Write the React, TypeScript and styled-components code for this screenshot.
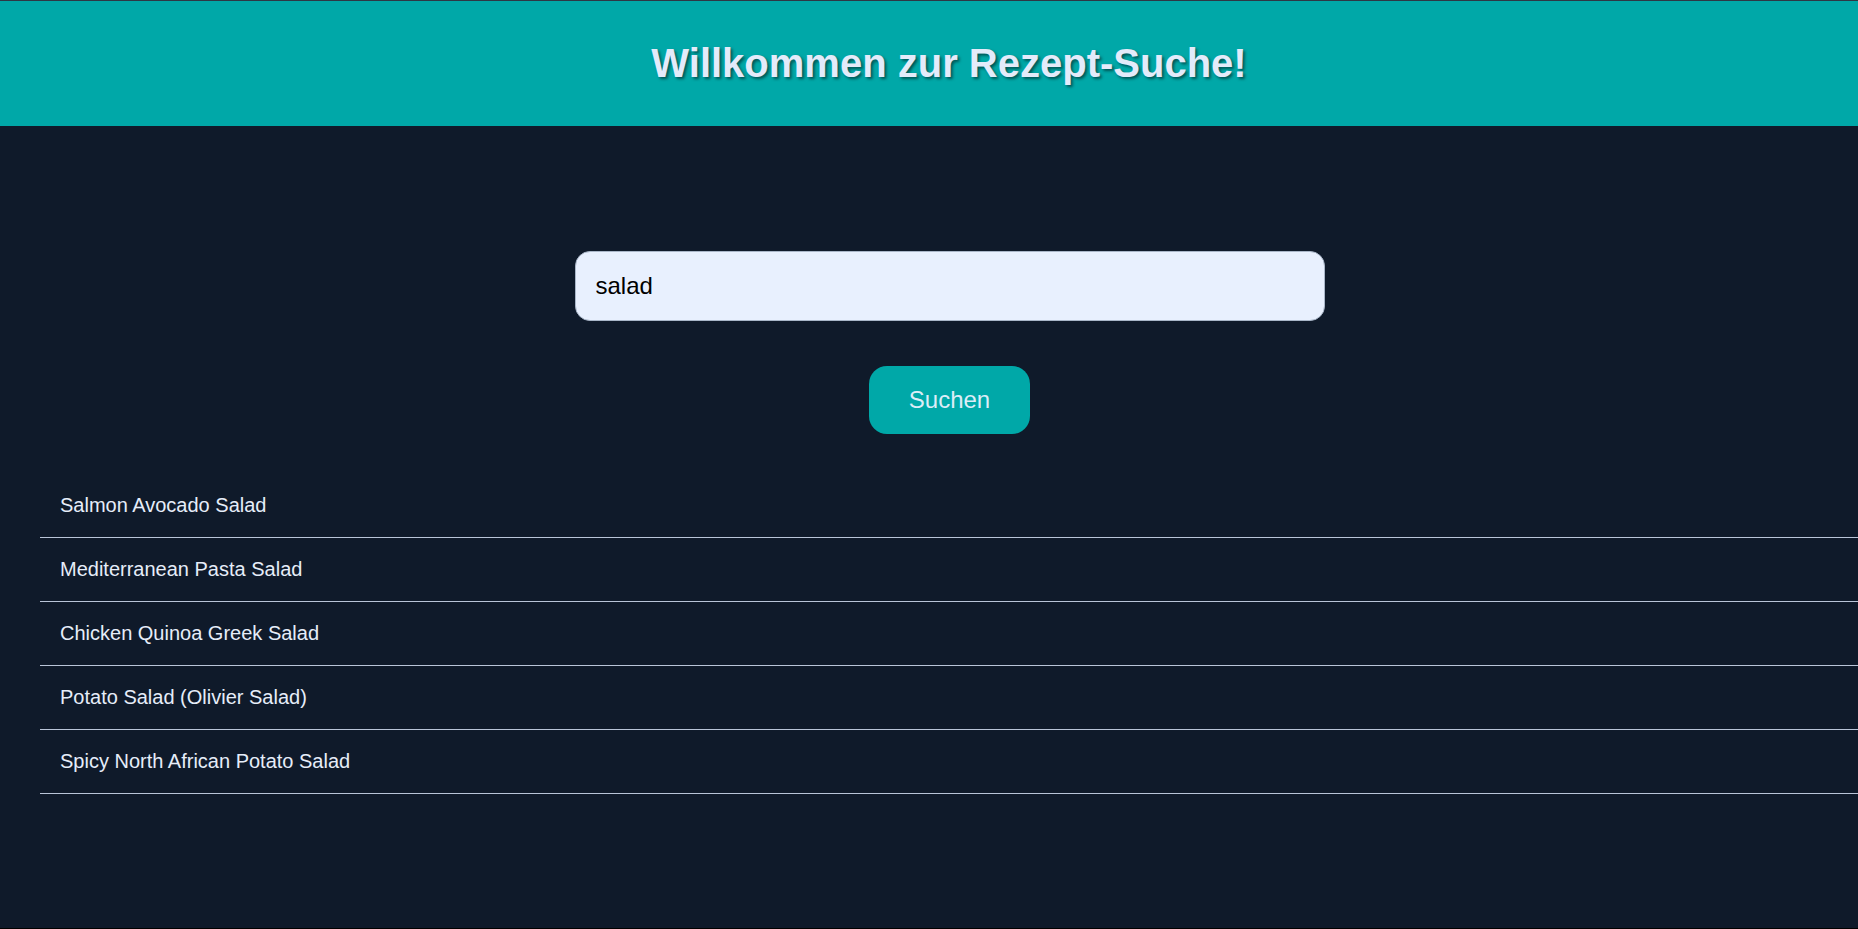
import styled, { createGlobalStyle } from "styled-components";

const GlobalStyle = createGlobalStyle`
  * {
    box-sizing: border-box;
  }
  body {
    margin: 0;
    background-color: #0f1a2a;
    font-family: "Liberation Sans", Arial, sans-serif;
  }
`;

const Page = styled.div`
  min-height: 100vh;
  background-color: #0f1a2a;
  border-top: 1px solid #2e3744;
  border-bottom: 1px solid #000;
`;

const Header = styled.header`
  background-color: #00a8a8;
  height: 125px;
  display: flex;
  align-items: center;
  justify-content: center;
  padding-left: 40px;
`;

const Title = styled.h1`
  margin: 0;
  font-size: 40px;
  font-weight: 700;
  color: #e3ebfa;
  text-shadow: 2px 2px 3px rgba(0, 0, 0, 0.5);
`;

const Main = styled.main`
  padding-top: 125px;
`;

const SearchForm = styled.form`
  display: flex;
  flex-direction: column;
  align-items: center;
  gap: 45px;
  padding-left: 41px;
`;

const SearchInput = styled.input`
  width: 750px;
  padding: 20px;
  font-size: 24px;
  font-family: "Liberation Sans", Arial, sans-serif;
  color: #000;
  background-color: #e8f0fe;
  border: 1px solid #a9b6c8;
  border-radius: 15px;
  outline: none;
`;

const SearchButton = styled.button`
  padding: 20px 40px;
  font-size: 24px;
  font-family: "Liberation Sans", Arial, sans-serif;
  color: #dcedf7;
  background-color: #00a8a8;
  border: none;
  border-radius: 18px;
  cursor: pointer;
`;

const ResultList = styled.ul`
  list-style: none;
  margin: 40px 0 0;
  padding: 0 0 0 40px;
`;

const ResultItem = styled.li`
  padding: 20px;
  font-size: 20px;
  color: #e6edf9;
  border-bottom: 1px solid #b9c5d8;
`;

const recipes = [
  "Salmon Avocado Salad",
  "Mediterranean Pasta Salad",
  "Chicken Quinoa Greek Salad",
  "Potato Salad (Olivier Salad)",
  "Spicy North African Potato Salad",
];

function App() {
  return (
    <Page>
      <GlobalStyle />
      <Header>
        <Title>Willkommen zur Rezept-Suche!</Title>
      </Header>
      <Main>
        <SearchForm onSubmit={(e) => e.preventDefault()}>
          <SearchInput type="text" defaultValue="salad" />
          <SearchButton type="submit">Suchen</SearchButton>
        </SearchForm>
        <ResultList>
          {recipes.map((r) => (
            <ResultItem key={r}>{r}</ResultItem>
          ))}
        </ResultList>
      </Main>
    </Page>
  );
}

export default App;
